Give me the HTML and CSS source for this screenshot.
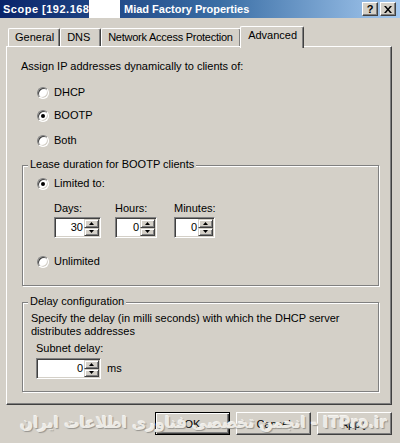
FILE: index.html
```html
<!DOCTYPE html>
<html>
<head>
<meta charset="utf-8">
<link rel="stylesheet" href="styles.css">
</head>
<body>
<div class="titlebar">
  <div class="title"><span class="ip">Scope [192.168</span><span class="redact"></span><span>Miad Factory Properties</span></div>
  <div class="caption-btns">
    <span class="cbtn help">?</span>
    <span class="cbtn"><svg width="8" height="7" viewBox="0 0 8 7"><path d="M0 0h2l2 2.5L6 0h2L5 3.5 8 7H6L4 4.5 2 7H0l3-3.5z" fill="#000"/></svg></span>
  </div>
</div>
<div class="tabs">
  <div class="tab t-general">General</div>
  <div class="tab t-dns">DNS</div>
  <div class="tab t-nap">Network Access Protection</div>
  <div class="tab active">Advanced</div>
</div>
<div class="panel">
  <p class="label">Assign IP addresses dynamically to clients of:</p>
  <div class="radio r1"><i></i><span>DHCP</span></div>
  <div class="radio r2 on"><i></i><span>BOOTP</span></div>
  <div class="radio r3"><i></i><span>Both</span></div>

  <div class="group lease">
    <span class="legend">Lease duration for BOOTP clients</span>
    <div class="radio on"><i></i><span>Limited to:</span></div>
    <div class="durations">
      <div class="dur"><span class="dlabel">Days:</span>
        <div class="spin w-days"><span class="val">30</span><span class="arrows"><b><svg width="5" height="3" viewBox="0 0 5 3"><path d="M2.5 0L5 3H0z"/></svg></b><b><svg width="5" height="3" viewBox="0 0 5 3"><path d="M0 0h5L2.5 3z"/></svg></b></span></div>
      </div>
      <div class="dur"><span class="dlabel">Hours:</span>
        <div class="spin w-hours"><span class="val">0</span><span class="arrows"><b><svg width="5" height="3" viewBox="0 0 5 3"><path d="M2.5 0L5 3H0z"/></svg></b><b><svg width="5" height="3" viewBox="0 0 5 3"><path d="M0 0h5L2.5 3z"/></svg></b></span></div>
      </div>
      <div class="dur"><span class="dlabel">Minutes:</span>
        <div class="spin w-min"><span class="val">0</span><span class="arrows"><b><svg width="5" height="3" viewBox="0 0 5 3"><path d="M2.5 0L5 3H0z"/></svg></b><b><svg width="5" height="3" viewBox="0 0 5 3"><path d="M0 0h5L2.5 3z"/></svg></b></span></div>
      </div>
    </div>
    <div class="radio unl"><i></i><span>Unlimited</span></div>
  </div>

  <div class="group delay">
    <span class="legend">Delay configuration</span>
    <p class="desc">Specify the delay (in milli seconds) with which the DHCP server<br>distributes addresses</p>
    <p class="sublabel">Subnet delay:</p>
    <div class="subrow">
      <div class="spin w-delay"><span class="val">0</span><span class="arrows"><b><svg width="5" height="3" viewBox="0 0 5 3"><path d="M2.5 0L5 3H0z"/></svg></b><b><svg width="5" height="3" viewBox="0 0 5 3"><path d="M0 0h5L2.5 3z"/></svg></b></span></div>
      <span class="ms">ms</span>
    </div>
  </div>
</div>
<div class="footer">
  <div class="btn default"><span>OK</span></div>
  <div class="btn"><span>Cancel</span></div>
  <div class="btn"><span>Apply</span></div>
  <div class="watermark">انجمن تخصصی فناوری اطلاعات ایران - ITPro.ir</div>
</div>
</body>
</html>
```
FILE: styles.css
```css
* { box-sizing: border-box; }
html, body { margin: 0; padding: 0; }
body {
  width: 400px;
  height: 443px;
  overflow: hidden;
  background: #D4D0C8;
  font-family: "Liberation Sans", Arial, sans-serif;
  font-size: 11px;
  color: #000;
}
p { margin: 0; }

.titlebar {
  height: 18px;
  background: linear-gradient(to right, #0A246A 0%, #3A6EA5 55%, #A6CAF0 100%);
  display: flex;
  align-items: center;
  justify-content: space-between;
  padding: 0 4px 0 3px;
}
.title {
  display: flex;
  align-items: center;
  color: #fff;
  font-weight: bold;
  font-size: 11px;
  white-space: nowrap;
  height: 18px;
}
.title .ip { letter-spacing: 0.5px; width: 86px; }
.redact { width: 31px; height: 18px; background: #fff; margin-right: 4px; }
.caption-btns { display: flex; gap: 2px; }
.cbtn {
  width: 16px;
  height: 14px;
  background: #D4D0C8;
  border: 1px solid;
  border-color: #fff #404040 #404040 #fff;
  box-shadow: inset -1px -1px #808080;
  display: flex;
  align-items: center;
  justify-content: center;
  font-weight: bold;
  font-size: 11px;
  line-height: 12px;
}

.tabs {
  display: flex;
  align-items: flex-end;
  height: 20px;
  margin-top: 8px;
  padding-left: 8px;
  position: relative;
  z-index: 1;
}
.tab {
  height: 18px;
  line-height: 17px;
  padding: 0 5px 0 6px;
  border-left: 1px solid #fff;
  border-top: 1px solid #fff;
  border-right: 1px solid #404040;
  box-shadow: inset -1px 0 #808080;
  border-radius: 2px 2px 0 0;
  white-space: nowrap;
}
.t-dns { width: 41px; }
.t-nap { width: 140px; padding: 0 0 0 6px; letter-spacing: -0.25px; }
.tab.active {
  height: 22px;
  margin: 0 -2px -2px -1px;
  padding: 0 6px 0 7px;
  background: #D4D0C8;
}

.panel {
  margin-left: 6px;
  width: 386px;
  height: 359px;
  border: 1px solid;
  border-color: #fff #404040 #404040 #fff;
  box-shadow: inset -1px -1px #808080;
  padding: 13px 12px 0 15px;
}
.label { line-height: 13px; margin-left: -1px; }

.radio {
  display: flex;
  align-items: center;
  gap: 5px;
  height: 13px;
  line-height: 13px;
  margin-left: 15px;
}
.radio i {
  position: relative;
  width: 12px;
  height: 12px;
  border-radius: 50%;
  background: #fff;
  border: 1px solid;
  border-color: #808080 #fff #fff #808080;
  box-shadow: inset 1px 1px #404040, inset -1px -1px #D4D0C8;
}
.radio.on i::after {
  content: "";
  position: absolute;
  left: 3px;
  top: 3px;
  width: 4px;
  height: 4px;
  border-radius: 50%;
  background: #000;
}
.r1 { margin-top: 13px; }
.r2 { margin-top: 10px; }
.r3 { margin-top: 12px; }

.group {
  position: relative;
  border: 1px solid #808080;
  box-shadow: 1px 1px 0 #fff, inset 1px 1px 0 #fff;
}
.legend {
  position: absolute;
  left: 5px;
  top: -8px;
  line-height: 13px;
  padding: 0 2px;
  background: #D4D0C8;
  white-space: nowrap;
}
.lease {
  margin-top: 18px;
  padding: 11px 0 17px 0;
}
.lease .radio { margin-left: 14px; }
.durations {
  display: grid;
  grid-template-columns: 61px 59px auto;
  margin: 12px 0 0 31px;
}
.dur { display: flex; flex-direction: column; align-items: flex-start; }
.dlabel { line-height: 13px; margin-bottom: 2px; }
.lease .unl { margin-top: 17px; }

.spin {
  display: flex;
  height: 21px;
  background: #fff;
  border: 1px solid;
  border-color: #808080 #fff #fff #808080;
  box-shadow: inset 1px 1px #404040, inset -1px -1px #D4D0C8;
  padding: 1px;
}
.w-days { width: 47px; }
.w-hours { width: 42px; }
.w-min { width: 41px; }
.w-delay { width: 65px; }
.spin .val {
  flex: 1;
  text-align: right;
  line-height: 17px;
  padding-right: 1px;
}
.arrows {
  width: 15px;
  display: flex;
  flex-direction: column;
}
.arrows b {
  flex: 1;
  display: flex;
  align-items: center;
  justify-content: center;
  background: #D4D0C8;
  border: 1px solid;
  border-color: #D4D0C8 #404040 #404040 #D4D0C8;
  box-shadow: inset 1px 1px #fff, inset -1px -1px #808080;
}
.arrows svg { display: block; fill: #000; }

.delay {
  margin-top: 16px;
  padding: 9px 0 12px 8px;
}
.desc { line-height: 13px; }
.sublabel { line-height: 13px; margin: 4px 0 0 5px; }
.subrow {
  display: flex;
  align-items: center;
  gap: 6px;
  margin: 3px 0 0 5px;
}
.ms { line-height: 13px; margin-top: -1px; }

.footer {
  position: relative;
  display: flex;
  justify-content: flex-end;
  gap: 6px;
  margin-top: 7px;
  padding-right: 8px;
}
.btn {
  width: 75px;
  height: 23px;
  background: #D4D0C8;
  border: 1px solid;
  border-color: #fff #404040 #404040 #fff;
  box-shadow: inset -1px -1px #808080;
  display: flex;
  align-items: center;
  justify-content: center;
}
.btn.default {
  border: 1px solid #000;
  box-shadow: inset 1px 1px #fff, inset -1px -1px #404040, inset -2px -2px #808080;
}
.watermark {
  position: absolute;
  right: 13px;
  top: 0;
  font-family: "DejaVu Sans", sans-serif;
  font-weight: bold;
  font-size: 15.3px;
  line-height: 22px;
  color: #ECEAE5;
  text-shadow: 1px 1px 1px #96948F, -1px -1px 0 #F4F3F0;
  white-space: nowrap;
  direction: ltr;
}
```
